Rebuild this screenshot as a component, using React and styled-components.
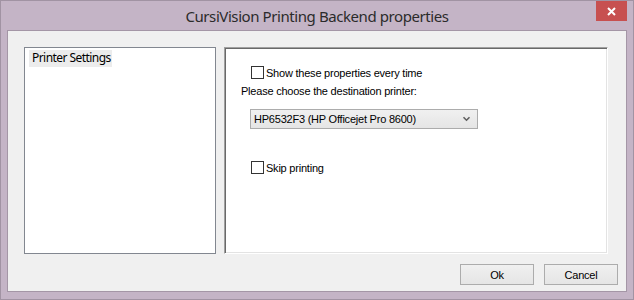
import styled, { createGlobalStyle } from 'styled-components';

const GlobalStyle = createGlobalStyle`
  html, body {
    margin: 0;
    padding: 0;
    background: #c4b4c6;
  }
`;

const Window = styled.div`
  width: 634px;
  height: 300px;
  box-sizing: border-box;
  border: 1px solid #a193a3;
  background: #c4b4c6;
  display: flex;
  flex-direction: column;
  padding: 0 6px 7px 6px;
`;

const TitleBar = styled.div`
  height: 29px;
  display: grid;
  grid-template-columns: 1fr auto 1fr;
  align-items: start;
`;

const Title = styled.div`
  grid-column: 2;
  padding-top: 6px;
  font-family: 'Noto Sans', 'Open Sans', sans-serif;
  font-size: 15px;
  line-height: 19px;
  letter-spacing: -0.42px;
  color: #2b2b2b;
  white-space: nowrap;
`;

const CloseButton = styled.button`
  grid-column: 3;
  justify-self: end;
  width: 31px;
  height: 20px;
  border: none;
  padding: 0;
  background: #c75050;
  display: flex;
  align-items: center;
  justify-content: center;
`;

const Client = styled.div`
  flex: 1;
  border: 1px solid #a496a6;
  background: #f0f0f0;
  display: flex;
  flex-direction: column;
  font-family: 'Liberation Sans', Arial, sans-serif;
  font-size: 11px;
  letter-spacing: -0.22px;
  color: #000;
`;

const PanelsRow = styled.div`
  display: flex;
  gap: 8px;
  padding: 16px 18px 0 16px;
  height: 207px;
  box-sizing: content-box;
`;

const ListPanel = styled.div`
  width: 192px;
  box-sizing: border-box;
  border: 1px solid #828790;
  background: #fff;
  padding: 2px 0 0 4px;
`;

const ListItem = styled.div`
  display: inline-block;
  padding: 0 1px 0 3px;
  height: 17px;
  line-height: 16px;
  background: ${(p) => (p.selected ? '#ececec' : 'transparent')};
  font-family: 'Noto Sans', 'Open Sans', sans-serif;
  font-size: 12px;
  letter-spacing: -0.55px;
  color: #000;
`;

const SettingsPanel = styled.div`
  flex: 1;
  box-sizing: border-box;
  background: #fff;
  border-style: solid;
  border-width: 1px;
  border-color: #a0a0a0 #ffffff #ffffff #a0a0a0;
  box-shadow: inset 1px 1px 0 #696969, inset -1px -1px 0 #e3e3e3;
  padding: 16px 0 0 16px;
  display: flex;
  flex-direction: column;
  align-items: flex-start;
`;

const CheckRow = styled.label`
  display: flex;
  align-items: center;
  gap: 2px;
  height: 17px;
  margin-left: 10px;
  margin-top: ${(p) => p.top || 0}px;
`;

const Box = styled.span`
  width: 13px;
  height: 13px;
  box-sizing: border-box;
  border: 1px solid #333;
  background: #fff;
`;

const Caption = styled.div`
  height: 17px;
  line-height: 17px;
  margin-top: ${(p) => p.top || 0}px;
`;

const Combo = styled.div`
  width: 228px;
  height: 20px;
  box-sizing: border-box;
  margin: ${(p) => p.top || 0}px 0 0 9px;
  border: 1px solid #acacac;
  background: linear-gradient(#f0f0f0, #e5e5e5);
  display: flex;
  align-items: center;
  justify-content: space-between;
  padding: 0 6px 0 3px;
`;

const ButtonRow = styled.div`
  display: flex;
  justify-content: flex-end;
  gap: 10px;
  padding: 10px 8px 0 0;
`;

const Button = styled.button`
  width: 74px;
  height: 21px;
  border: 1px solid #acacac;
  background: linear-gradient(#f0f0f0, #e5e5e5);
  font-family: 'Liberation Sans', Arial, sans-serif;
  font-size: 11px;
  letter-spacing: -0.22px;
  color: #000;
  padding: 0;
`;

const Chevron = () => (
  <svg width="9" height="6" viewBox="0 0 9 6">
    <path d="M1.5 1.2 L4.5 4.2 L7.5 1.2" fill="none" stroke="#606060" strokeWidth="1.6" />
  </svg>
);

const CloseIcon = () => (
  <svg width="9" height="9" viewBox="0 0 9 9">
    <path d="M1 1 L8 8 M8 1 L1 8" stroke="#fff" strokeWidth="2" />
  </svg>
);

const App = () => (
  <>
    <GlobalStyle />
    <Window>
      <TitleBar>
        <Title>CursiVision Printing Backend properties</Title>
        <CloseButton aria-label="Close">
          <CloseIcon />
        </CloseButton>
      </TitleBar>
      <Client>
        <PanelsRow>
          <ListPanel>
            <ListItem selected>Printer Settings</ListItem>
          </ListPanel>
          <SettingsPanel>
            <CheckRow>
              <Box />
              <span>Show these properties every time</span>
            </CheckRow>
            <Caption top={2}>Please choose the destination printer:</Caption>
            <Combo top={9}>
              <span>HP6532F3 (HP Officejet Pro 8600)</span>
              <Chevron />
            </Combo>
            <CheckRow top={30}>
              <Box />
              <span>Skip printing</span>
            </CheckRow>
          </SettingsPanel>
        </PanelsRow>
        <ButtonRow>
          <Button>Ok</Button>
          <Button>Cancel</Button>
        </ButtonRow>
      </Client>
    </Window>
  </>
);

export default App;
